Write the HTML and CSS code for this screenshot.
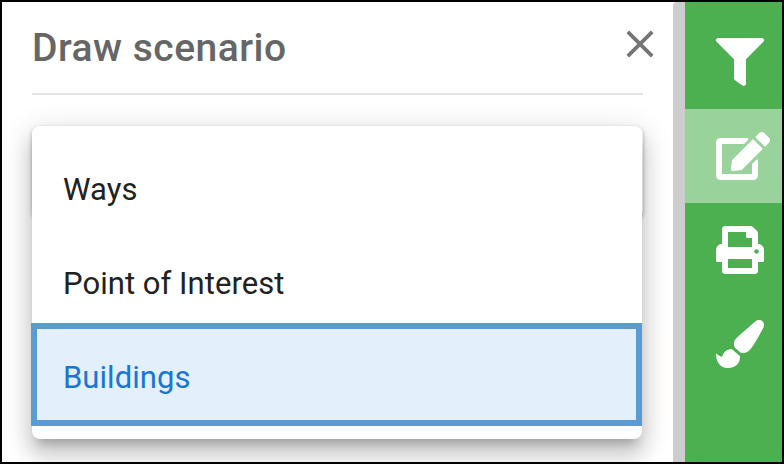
FILE: index.html
```html
<!DOCTYPE html>
<html lang="en">
<head>
<meta charset="utf-8">
<title>Draw scenario</title>
<link rel="stylesheet" href="styles.css">
</head>
<body>
<div class="window">
  <main class="panel">
    <header class="panel-header">
      <h1>Draw scenario</h1>
      <button class="close" aria-label="Close"><svg viewBox="0 0 28 28"><path d="M1.8 1.8 26.2 26.2M26.2 1.8 1.8 26.2"/></svg></button>
    </header>
    <div class="select">
      <ul class="menu">
        <li>Ways</li>
        <li>Point of Interest</li>
        <li class="selected">Buildings</li>
      </ul>
    </div>
  </main>
  <div class="scrollbar"></div>
  <nav class="toolbar">
    <a class="tool"><svg viewBox="0 0 512 512"><path d="M487.976 0H24.028C2.71 0-8.047 25.866 7.058 40.971L192 225.941V432c0 7.831 3.821 15.17 10.237 19.662l80 55.98C298.02 518.69 320 507.493 320 487.98V225.941l184.947-184.97C520.021 25.896 509.338 0 487.976 0z"/></svg></a>
    <a class="tool active"><svg class="wide" viewBox="0 0 576 512"><path d="M402.6 83.2l90.2 90.2c3.8 3.8 3.8 10 0 13.8L274.4 405.6l-92.8 10.3c-12.4 1.4-22.9-9.1-21.5-21.5l10.3-92.8L388.8 83.2c3.8-3.8 10-3.8 13.8 0zm162-22.9l-48.8-48.8c-15.2-15.2-39.9-15.2-55.2 0l-35.4 35.4c-3.8 3.8-3.8 10 0 13.8l90.2 90.2c3.8 3.8 10 3.8 13.8 0l35.4-35.4c15.2-15.3 15.2-40 0-55.2zM384 346.2V448H64V128h229.8c3.2 0 6.2-1.3 8.5-3.5l40-40c7.6-7.6 2.2-20.5-8.5-20.5H48C21.5 64 0 85.5 0 112v352c0 26.5 21.5 48 48 48h352c26.5 0 48-21.5 48-48V306.2c0-10.7-12.9-16-20.5-8.5l-40 40c-2.2 2.3-3.5 5.3-3.5 8.5z"/></svg></a>
    <a class="tool"><svg viewBox="0 0 512 512"><path d="M448 192V77.25c0-8.49-3.37-16.62-9.37-22.63L393.37 9.37c-6-6-14.14-9.37-22.63-9.37H96C78.33 0 64 14.33 64 32v160c-35.35 0-64 28.65-64 64v112c0 8.84 7.16 16 16 16h48v96c0 17.67 14.33 32 32 32h320c17.67 0 32-14.33 32-32v-96h48c8.84 0 16-7.16 16-16V256c0-35.35-28.65-64-64-64zm-64 256H128v-96h256v96zm0-224H128V64h192v48c0 8.84 7.16 16 16 16h48v96zm48 72c-13.25 0-24-10.75-24-24 0-13.26 10.75-24 24-24s24 10.74 24 24c0 13.25-10.75 24-24 24z"/></svg></a>
    <a class="tool"><svg viewBox="0 0 512 512"><path d="M167.02 309.34c-40.12 2.58-76.53 17.86-97.19 72.3-2.35 6.21-8 9.98-14.59 9.98-11.11 0-45.46-27.67-55.25-34.35C0 439.62 37.93 512 128 512c75.86 0 128-43.77 128-120.19 0-3.11-.65-6.08-.97-9.13l-88.01-73.34zM457.89 0c-15.16 0-29.37 6.71-40.21 16.45C213.27 199.05 192 203.34 192 257.09c0 13.7 3.25 26.76 8.73 38.7l63.82 53.18c7.21 1.8 14.64 3.03 22.39 3.03 62.11 0 98.11-45.47 211.16-256.46 7.38-14.35 13.9-29.85 13.9-45.99C512 20.64 486 0 457.89 0z"/></svg></a>
  </nav>
</div>
</body>
</html>
```
FILE: styles.css
```css
* { box-sizing: border-box; }
body { margin: 0; font-family: Roboto, "Liberation Sans", sans-serif; }
.window {
  display: flex;
  width: 784px;
  height: 464px;
  border: 2px solid #000;
  background: #fff;
  overflow: hidden;
}
.panel {
  width: 671px;
  padding: 0 30px;
  overflow: hidden;
}
.panel-header {
  display: flex;
  justify-content: space-between;
  align-items: center;
  height: 93px;
  border-bottom: 2px solid #e3e3e3;
}
h1 {
  margin: 0;
  font-size: 39px;
  line-height: 46px;
  font-weight: 500;
  letter-spacing: 0.5px;
  color: #666;
}
.close {
  display: flex;
  margin: 0 -11px 8px 0;
  padding: 0;
  border: 0;
  background: none;
}
.close svg { width: 28px; height: 28px; fill: none; stroke: #757575; stroke-width: 3.8; }
.select {
  height: 92px;
  margin-top: 31px;
  border-radius: 8px;
  box-shadow: 0 2px 4px rgba(0, 0, 0, 0.3);
}
.menu {
  width: 609.5px;
  height: 313px;
  margin: 0;
  padding: 16px 0;
  list-style: none;
  background: #fff;
  border-radius: 8px;
  box-shadow: 0 10px 10px -6px rgba(0, 0, 0, 0.2), 0 16px 20px 2px rgba(0, 0, 0, 0.14), 0 6px 28px 4px rgba(0, 0, 0, 0.12);
}
.menu li {
  display: flex;
  align-items: center;
  height: 94px;
  padding: 0 31px;
  font-size: 31px;
  letter-spacing: 0.05px;
  color: #212121;
}
.menu li.selected {
  height: 103px;
  margin: -7px 0 0 -1px;
  padding: 5px 26px 0;
  border: 6px solid #5b9bd5;
  background: #e3effb;
  color: #1976d2;
}
.scrollbar { width: 12px; background: #cdcdcd; border-radius: 4px 0 0 0; }
.toolbar { flex: 1; padding-top: 13px; background: #4caf50; }
.tool { display: flex; align-items: center; height: 94px; padding-left: 31px; }
.tool.active { background: #99d29b; }
.tool svg { width: 48px; height: 48px; fill: #fff; }
.tool svg.wide { width: 54px; }
```
